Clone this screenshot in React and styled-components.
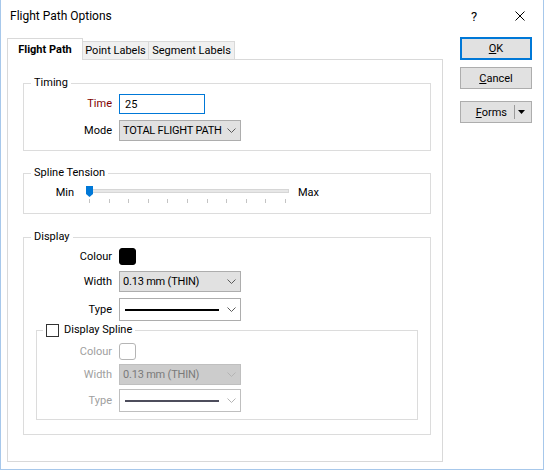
import React from 'react';
import styled, { createGlobalStyle } from 'styled-components';

const GlobalStyle = createGlobalStyle`
  html, body {
    margin: 0;
    padding: 0;
    background: #fff;
  }
  body {
    font-family: Roboto, "Noto Sans", sans-serif;
    font-size: 11px;
    color: #000;
  }
  * {
    box-sizing: border-box;
  }
`;

const Window = styled.div`
  width: 544px;
  height: 470px;
  border: 1px solid #a7c8eb;
  border-top: none;
  background: #fff;
  display: flex;
  flex-direction: column;
`;

const TitleBar = styled.div`
  display: flex;
  align-items: center;
  height: 32px;
  padding-left: 9px;
`;

const Title = styled.span`
  flex: 1;
  font-size: 12px;
  color: #000;
`;

const CaptionButton = styled.div`
  width: 46px;
  height: 32px;
  display: flex;
  align-items: center;
  justify-content: center;
  font-size: 13px;
`;

const Body = styled.div`
  display: flex;
  padding: 6px 0 0 6px;
`;

const TabArea = styled.div`
  width: 436px;
  display: flex;
  flex-direction: column;
`;

const TabStrip = styled.div`
  display: flex;
  align-items: flex-end;
  height: 21px;
  position: relative;
  z-index: 1;
`;

const Tab = styled.div`
  width: ${(p) => p.$w}px;
  height: ${(p) => (p.$active ? 22 : 18)}px;
  margin-bottom: ${(p) => (p.$active ? -1 : 0)}px;
  border: 1px solid #d9d9d9;
  border-bottom: none;
  background: ${(p) => (p.$active ? '#fff' : '#f0f0f0')};
  font-weight: ${(p) => (p.$active ? 700 : 400)};
  white-space: nowrap;
  display: flex;
  align-items: center;
  justify-content: center;
  & + & {
    margin-left: -1px;
  }
`;

const Panel = styled.div`
  height: 403px;
  border: 1px solid #d9d9d9;
  padding: 15px 11px 0 15px;
  background: #fff;
`;

const Group = styled.fieldset`
  margin: ${(p) => p.$mt || 0}px ${(p) => p.$mr || 0}px 0 ${(p) => p.$ml || 0}px;
  padding: ${(p) => p.$pt || 0}px 0 ${(p) => p.$pb || 0}px 0;
  border: 1px solid #dcdcdc;
  min-width: 0;
`;

const Legend = styled.legend`
  margin-left: ${(p) => p.$ml || 7}px;
  padding: 0 3px;
  line-height: 16px;
  display: flex;
  align-items: center;
  gap: 5px;
`;

const FormGrid = styled.div`
  display: grid;
  grid-template-columns: ${(p) => p.$labelWidth}px 122px;
  column-gap: 7px;
  row-gap: ${(p) => p.$rowGap || 6}px;
  align-items: center;
`;

const Label = styled.span`
  text-align: right;
  line-height: 16px;
  color: ${(p) => (p.$required ? '#800000' : p.$disabled ? '#a0a0a0' : '#000')};
`;

const TextInput = styled.div`
  width: 86px;
  height: 20px;
  border: 1px solid #0078d7;
  padding-left: 5px;
  display: flex;
  align-items: center;
  background: #fff;
`;

const Select = styled.div`
  width: 122px;
  height: ${(p) => p.$h || 21}px;
  border: 1px solid ${(p) => (p.$disabled ? '#bfbfbf' : '#adadad')};
  background: ${(p) => p.$bg};
  color: ${(p) => (p.$disabled ? '#7a7a7a' : '#000')};
  display: flex;
  align-items: center;
  padding: 0 4px 0 3px;
  svg {
    flex-shrink: 0;
  }
`;

const SelectValue = styled.span`
  flex: 1;
  white-space: nowrap;
  overflow: hidden;
  letter-spacing: -0.2px;
`;

const LineSample = styled.div`
  width: 94px;
  height: 2px;
  margin-left: 2px;
  background: ${(p) => (p.$disabled ? '#4d4d5c' : '#000')};
  margin-right: auto;
`;

const Swatch = styled.div`
  width: 17px;
  height: 17px;
  border-radius: 3px;
  border: 1px solid ${(p) => (p.$disabled ? '#b5b5b5' : '#000')};
  background: ${(p) => (p.$disabled ? '#fff' : '#000')};
`;

const Checkbox = styled.span`
  width: 13px;
  height: 13px;
  border: 1px solid #333;
  background: #fff;
  display: inline-block;
`;

const SliderRow = styled.div`
  display: grid;
  grid-template-columns: 62px 206px auto;
  align-items: start;
`;

const SliderLabel = styled.span`
  text-align: ${(p) => p.$align};
  line-height: 16px;
  margin-top: -1px;
  padding: ${(p) => (p.$align === 'right' ? '0 12px 0 0' : '0 0 0 6px')};
`;

const SliderBox = styled.div`
  position: relative;
  height: 18px;
`;

const Track = styled.div`
  margin: 3px 0 0 2px;
  width: 201px;
  height: 4px;
  background: #e7e7e7;
  border: 1px solid #d6d6d6;
`;

const Ticks = styled.div`
  display: flex;
  justify-content: space-between;
  margin-top: 6px;
  padding: 0 3px;
  width: 203px;
`;

const Tick = styled.span`
  width: 1px;
  height: 4px;
  background: #c4c4c4;
`;

const Thumb = styled.svg`
  position: absolute;
  left: 0;
  top: 0;
`;

const ButtonColumn = styled.div`
  width: 72px;
  margin: -1px 0 0 17px;
  display: flex;
  flex-direction: column;
`;

const Button = styled.div`
  height: ${(p) => p.$h || 23}px;
  margin-top: ${(p) => p.$mt || 0}px;
  background: #e1e1e1;
  border: ${(p) => (p.$default ? '2px solid #0078d7' : '1px solid #adadad')};
  display: flex;
  align-items: center;
  justify-content: center;
`;

const SplitButton = styled(Button)`
  justify-content: flex-end;
  padding-right: 6px;
`;

const Separator = styled.span`
  width: 1px;
  height: 14px;
  background: #9a9a9a;
  margin: 0 3px 0 7px;
`;

const Chevron = ({ disabled }) => (
  <svg width="9" height="5" viewBox="0 0 9 5">
    <polyline
      points="0.5,0.5 4.5,4.5 8.5,0.5"
      fill="none"
      stroke={disabled ? '#b4b4b4' : '#5a5a5a'}
      strokeWidth="1"
    />
  </svg>
);

const Slider = () => (
  <SliderBox>
    <Track />
    <Ticks>
      {Array.from({ length: 11 }).map((_, i) => (
        <Tick key={i} />
      ))}
    </Ticks>
    <Thumb width="7" height="11" viewBox="0 0 7 11">
      <polygon points="0,0 7,0 7,8 3.5,11 0,8" fill="#0078d7" />
    </Thumb>
  </SliderBox>
);

export default function App() {
  return (
    <>
      <GlobalStyle />
      <Window>
        <TitleBar>
          <Title>Flight Path Options</Title>
          <CaptionButton>?</CaptionButton>
          <CaptionButton>
            <svg width="10" height="10" viewBox="0 0 10 10">
              <path d="M0.5 0.5 L9.5 9.5 M9.5 0.5 L0.5 9.5" stroke="#000" strokeWidth="1" />
            </svg>
          </CaptionButton>
        </TitleBar>
        <Body>
          <TabArea>
            <TabStrip>
              <Tab $active $w={76}>Flight Path</Tab>
              <Tab $w={67}>Point Labels</Tab>
              <Tab $w={87}>Segment Labels</Tab>
            </TabStrip>
            <Panel>
              <Group $pt={3} $pb={9}>
                <Legend>Timing</Legend>
                <FormGrid $labelWidth={88}>
                  <Label $required>Time</Label>
                  <TextInput>25</TextInput>
                  <Label>Mode</Label>
                  <Select $bg="#e1e1e1">
                    <SelectValue>TOTAL FLIGHT PATH</SelectValue>
                    <Chevron />
                  </Select>
                </FormGrid>
              </Group>

              <Group $mt={14} $pt={5} $pb={9}>
                <Legend>Spline Tension</Legend>
                <SliderRow>
                  <SliderLabel $align="right">Min</SliderLabel>
                  <Slider />
                  <SliderLabel $align="left">Max</SliderLabel>
                </SliderRow>
              </Group>

              <Group $mt={15} $pt={3} $pb={14}>
                <Legend>Display</Legend>
                <FormGrid $labelWidth={88}>
                  <Label>Colour</Label>
                  <Swatch />
                  <Label>Width</Label>
                  <Select $bg="#e1e1e1">
                    <SelectValue>0.13 mm (THIN)</SelectValue>
                    <Chevron />
                  </Select>
                  <Label>Type</Label>
                  <Select $bg="#fff" $h={23}>
                    <LineSample />
                    <Chevron />
                  </Select>
                </FormGrid>

                <Group $mt={1} $ml={12} $mr={12} $pt={5} $pb={7}>
                  <Legend $ml={6}>
                    <Checkbox />
                    Display Spline
                  </Legend>
                  <FormGrid $labelWidth={75} $rowGap={4}>
                    <Label $disabled>Colour</Label>
                    <Swatch $disabled />
                    <Label $disabled>Width</Label>
                    <Select $bg="#cccccc" $disabled>
                      <SelectValue>0.13 mm (THIN)</SelectValue>
                      <Chevron disabled />
                    </Select>
                    <Label $disabled>Type</Label>
                    <Select $bg="#fff" $h={23} $disabled>
                      <LineSample $disabled />
                      <Chevron disabled />
                    </Select>
                  </FormGrid>
                </Group>
              </Group>
            </Panel>
          </TabArea>

          <ButtonColumn>
            <Button $default>
              <span>
                <u>O</u>K
              </span>
            </Button>
            <Button $mt={7} $h={22}>
              <span>
                <u>C</u>ancel
              </span>
            </Button>
            <SplitButton $mt={12} $h={22}>
              <span>
                <u>F</u>orms
              </span>
              <Separator />
              <svg width="7" height="4" viewBox="0 0 7 4">
                <polygon points="0,0 7,0 3.5,4" fill="#000" />
              </svg>
            </SplitButton>
          </ButtonColumn>
        </Body>
      </Window>
    </>
  );
}
